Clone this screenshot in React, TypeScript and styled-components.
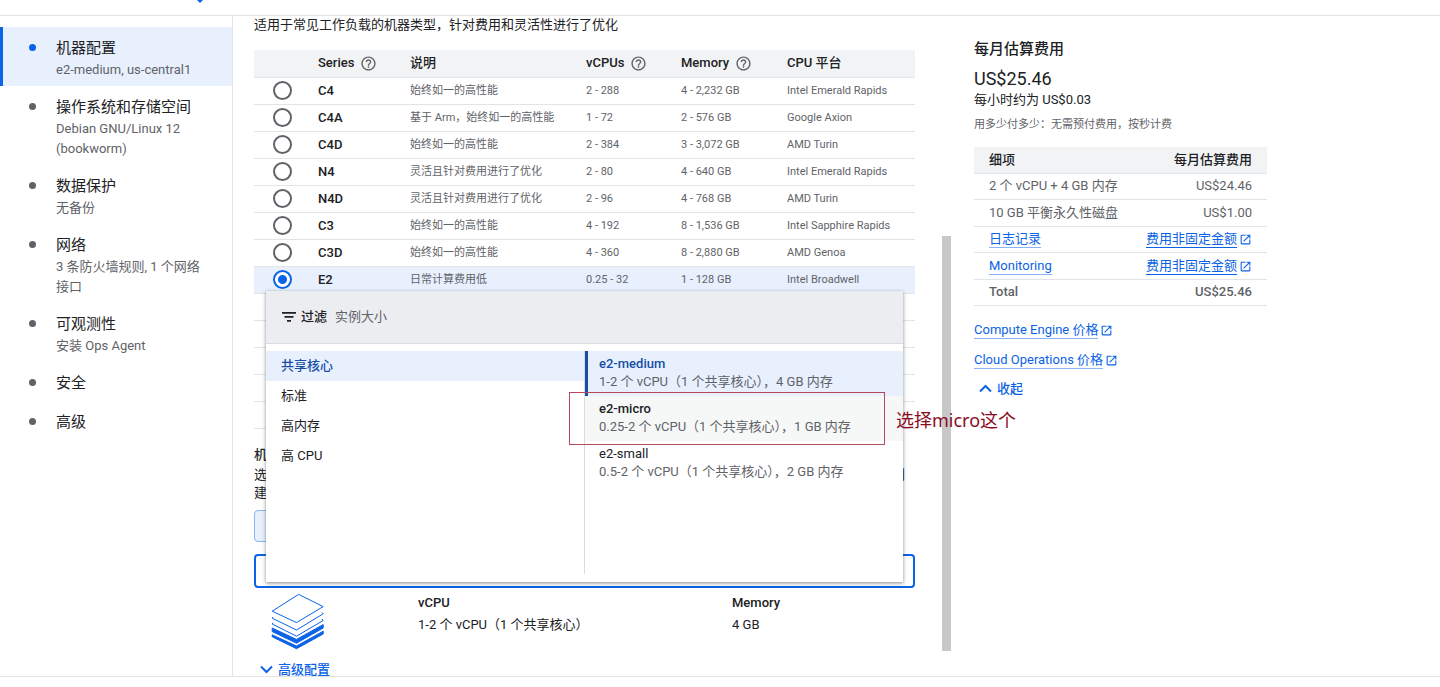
import React, { useState } from "react";
import styled, { createGlobalStyle, css } from "styled-components";
import { MdHelpOutline, MdOpenInNew } from "react-icons/md";

const color = {
  text: "#202124",
  muted: "#5f6368",
  line: "#e3e4e6",
  blue: "#0b63e5",
  navy: "#174ea6",
  selected: "#e8f0fe",
  header: "#f1f3f4",
  note: "#8b0a23",
};

const GlobalStyle = createGlobalStyle`
  * { box-sizing: border-box; }
  body {
    margin: 0;
    background: #fff;
    color: ${color.text};
    font-family: Roboto, "Noto Sans CJK SC", sans-serif;
    font-size: 13px;
    line-height: 18px;
  }
  button { font: inherit; color: inherit; cursor: pointer; }
  p, h2, h3, ul, ol, dl, dd { margin: 0; padding: 0; }
  ul, ol { list-style: none; }
`;

const Page = styled.div`
  display: flex;
  flex-direction: column;
  height: 100vh;
  overflow: hidden;
`;

const TopBar = styled.header`
  flex: none;
  height: 16px;
  padding-left: 196px;
  border-bottom: 1px solid ${color.line};
  svg { display: block; }
`;

const Body = styled.div`
  display: flex;
  flex: 1;
  min-height: 0;
  margin-bottom: 10px;
  border-bottom: 1px solid ${color.line};
  overflow: hidden;
`;

/* ---- step navigation ---- */

const Sidebar = styled.nav`
  flex: none;
  width: 233px;
  padding-top: 11px;
  border-right: 1px solid ${color.line};
`;

const Step = styled.a<{ $active?: boolean }>`
  display: flex;
  gap: 20px;
  padding: 11px 24px 6px 29px;
  color: ${color.text};
  text-decoration: none;
  ${(p) =>
    p.$active &&
    css`
      padding-left: 26px;
      background: ${color.selected};
      border-left: 3px solid ${color.blue};
    `}
`;

const Bullet = styled.span<{ $active?: boolean }>`
  flex: none;
  width: 7px;
  height: 7px;
  margin-top: 6px;
  border-radius: 50%;
  background: ${(p) => (p.$active ? color.blue : color.muted)};
`;

const StepTitle = styled.span`
  display: block;
  padding-bottom: 2px;
  font-size: 15px;
  line-height: 20px;
`;

const StepNote = styled.span`
  display: block;
  color: ${color.muted};
  line-height: 20px;
`;

/* ---- main column ---- */

const Main = styled.main`
  flex: 0 1 682px;
  min-width: 0;
  padding-left: 21px;
`;

const Intro = styled.p`
  padding-bottom: 16px;
`;

const SeriesTable = styled.table`
  width: 100%;
  table-layout: fixed;
  border-collapse: collapse;
  tr { border-bottom: 1px solid ${color.line}; }
  th, td {
    height: 27px;
    padding: 0;
    text-align: left;
    white-space: nowrap;
  }
  thead { background: ${color.header}; }
  thead th { font-weight: 500; }
  tbody th { font-weight: 500; }
  td { color: ${color.muted}; font-size: 11px; }
`;

const SeriesRow = styled.tr<{ $selected?: boolean }>`
  background: ${(p) => (p.$selected ? color.selected : "transparent")};
`;

const HeadLabel = styled.span`
  display: flex;
  align-items: center;
  gap: 6px;
  svg { color: ${color.muted}; }
`;

const Radio = styled.input`
  appearance: none;
  display: block;
  width: 19px;
  height: 19px;
  margin: 0 0 0 19px;
  border: 2px solid ${color.muted};
  border-radius: 50%;
  background: #fff;
  &:checked {
    border-color: ${color.blue};
    background: radial-gradient(circle, ${color.blue} 4px, #fff 5px);
  }
`;

const TypeHeading = styled.h3`
  padding: 17px 0 2px;
  font-size: 13px;
  font-weight: 500;
`;

const TypeText = styled.p`
  display: flex;
  justify-content: space-between;
  padding-right: 10px;
`;

const ModeButton = styled.button`
  display: block;
  width: 58px;
  height: 32px;
  margin: 8px 0 12px;
  padding: 0;
  border: 1px solid #8ab4f8;
  border-radius: 4px 0 0 4px;
  background: ${color.selected};
`;

const Picker = styled.div`
  position: relative;
`;

const PickerField = styled.button`
  display: block;
  width: 100%;
  height: 34px;
  border: 2px solid ${color.blue};
  border-radius: 4px;
  background: #fff;
`;

const Popover = styled.div`
  position: absolute;
  z-index: 2;
  left: 12px;
  right: 12px;
  bottom: 6px;
  height: 291px;
  display: flex;
  flex-direction: column;
  background: #fff;
  box-shadow: 0 1px 3px rgba(60, 64, 67, 0.5), 0 2px 6px rgba(60, 64, 67, 0.15);
`;

const FilterBar = styled.label`
  display: flex;
  align-items: center;
  height: 53px;
  padding: 0 16px;
  background: #ecedf1;
  border-bottom: 1px solid #dadce0;
  font-weight: 500;
`;

const FilterInput = styled.input`
  flex: 1;
  min-width: 0;
  padding: 0 0 0 8px;
  border: 0;
  outline: 0;
  background: transparent;
  font: inherit;
  font-weight: 400;
  &::placeholder { color: ${color.muted}; opacity: 1; }
`;

const FilterCaption = styled.span`
  padding-left: 5px;
`;

const PopoverBody = styled.div`
  display: flex;
  flex: 1;
  padding: 7px 0 8px;
`;

const Families = styled.ul`
  flex: 1;
`;

const Family = styled.button<{ $active?: boolean }>`
  display: block;
  width: 100%;
  height: 30px;
  padding: 0 15px;
  border: 0;
  text-align: left;
  background: ${(p) => (p.$active ? color.selected : "#fff")};
  color: ${(p) => (p.$active ? color.navy : color.text)};
  font-weight: ${(p) => (p.$active ? 500 : 400)};
`;

const Sizes = styled.ul`
  flex: 1;
  border-left: 1px solid #dadce0;
`;

const SizeItem = styled.li`
  position: relative;
`;

const SizeOption = styled.button<{ $state?: "selected" | "hover" }>`
  display: block;
  width: 100%;
  height: 45px;
  padding: 4px 0 5px 14px;
  border: 0;
  text-align: left;
  background: #fff;
  ${(p) =>
    p.$state === "selected" &&
    css`
      padding-left: 11px;
      border-left: 3px solid ${color.navy};
      background: ${color.selected};
    `}
  ${(p) => p.$state === "hover" && css`background: #f6f8f7;`}
`;

const SizeName = styled.span<{ $state?: "selected" | "hover" }>`
  display: block;
  font-weight: ${(p) => (p.$state ? 500 : 400)};
  color: ${(p) => (p.$state === "selected" ? color.navy : color.text)};
`;

const SizeDetail = styled.span`
  display: block;
  color: ${color.muted};
`;

const Marker = styled.div`
  position: absolute;
  z-index: 3;
  top: -4px;
  bottom: -4px;
  left: -16px;
  right: 18px;
  border: 1px solid #b5495b;
  pointer-events: none;
`;

const MarkerNote = styled.span`
  position: absolute;
  left: 100%;
  top: 14px;
  padding-left: 12px;
  color: ${color.note};
  font-family: "Noto Sans", "Noto Sans CJK SC", sans-serif;
  font-size: 18px;
  line-height: 26px;
  white-space: nowrap;
`;

const Specs = styled.div`
  display: flex;
  padding-top: 5px;
  height: 73px;
`;

const LayersCell = styled.div`
  flex: none;
  width: 164px;
  padding-left: 17px;
`;

const Spec = styled.dl`
  flex: none;
  width: 314px;
  padding-top: 1px;
  dt { font-weight: 500; padding-bottom: 4px; }
  &:last-child { flex: 1; }
`;

const Toggle = styled.button<{ $inset: number }>`
  display: flex;
  align-items: center;
  gap: 5px;
  padding: 0 0 0 ${(p) => p.$inset}px;
  border: 0;
  background: none;
  color: ${color.blue};
  font-weight: 500;
`;

const Track = styled.div`
  flex: none;
  width: 36px;
  padding: 220px 0 25px 27px;
`;

const Thumb = styled.div`
  height: 100%;
  background: #c8c8c8;
`;

/* ---- cost column ---- */

const Costs = styled.aside`
  flex: 0 1 293px;
  margin-left: 23px;
  padding-top: 23px;
`;

const CostTitle = styled.h2`
  font-size: 15px;
  line-height: 20px;
  font-weight: 500;
`;

const CostTotal = styled.p`
  padding-top: 8px;
  font-size: 18px;
  line-height: 24px;
`;

const CostNote = styled.p`
  padding: 7px 0 13px;
  color: ${color.muted};
  font-size: 11px;
`;

const CostTable = styled.table`
  width: 100%;
  border-collapse: collapse;
  color: ${color.muted};
  tr { border-bottom: 1px solid ${color.line}; }
  tr > * { height: 26px; padding: 0 0 0 15px; text-align: left; font-weight: 400; white-space: nowrap; }
  tr:nth-child(even) > * { height: 27px; }
  tr > :last-child { padding: 0 15px 0 0; text-align: right; }
  thead th { background: ${color.header}; color: ${color.text}; font-weight: 500; }
  tfoot tr > * { font-weight: 500; }
`;

const Link = styled.a`
  display: inline-flex;
  align-items: center;
  gap: 2px;
  color: ${color.blue};
  text-decoration: none;
`;

const LinkText = styled.span<{ $strong?: boolean }>`
  line-height: 16px;
  border-bottom: 1px solid ${(p) => (p.$strong ? color.blue : "#8ab4f8")};
`;

const PriceLinks = styled.ul`
  display: flex;
  flex-direction: column;
  gap: 12px;
  padding: 16px 0 10px;
  li { display: flex; height: 18px; }
`;

const steps = [
  { title: "机器配置", note: "e2-medium, us-central1" },
  { title: "操作系统和存储空间", note: "Debian GNU/Linux 12 (bookworm)" },
  { title: "数据保护", note: "无备份" },
  { title: "网络", note: "3 条防火墙规则, 1 个网络接口" },
  { title: "可观测性", note: "安装 Ops Agent" },
  { title: "安全" },
  { title: "高级" },
];

const series = [
  ["C4", "始终如一的高性能", "2 - 288", "4 - 2,232 GB", "Intel Emerald Rapids"],
  ["C4A", "基于 Arm，始终如一的高性能", "1 - 72", "2 - 576 GB", "Google Axion"],
  ["C4D", "始终如一的高性能", "2 - 384", "3 - 3,072 GB", "AMD Turin"],
  ["N4", "灵活且针对费用进行了优化", "2 - 80", "4 - 640 GB", "Intel Emerald Rapids"],
  ["N4D", "灵活且针对费用进行了优化", "2 - 96", "4 - 768 GB", "AMD Turin"],
  ["C3", "始终如一的高性能", "4 - 192", "8 - 1,536 GB", "Intel Sapphire Rapids"],
  ["C3D", "始终如一的高性能", "4 - 360", "8 - 2,880 GB", "AMD Genoa"],
  ["E2", "日常计算费用低", "0.25 - 32", "1 - 128 GB", "Intel Broadwell"],
];

const families = ["共享核心", "标准", "高内存", "高 CPU"];

const sizes: { name: string; detail: string; state?: "selected" | "hover" }[] = [
  { name: "e2-medium", detail: "1-2 个 vCPU（1 个共享核心），4 GB 内存", state: "selected" },
  { name: "e2-micro", detail: "0.25-2 个 vCPU（1 个共享核心），1 GB 内存", state: "hover" },
  { name: "e2-small", detail: "0.5-2 个 vCPU（1 个共享核心），2 GB 内存" },
];

const Chevron = ({ up }: { up?: boolean }) => (
  <svg width="13" height="9" viewBox="0 0 13 9" fill="none" stroke="currentColor" strokeWidth="2">
    <path d={up ? "M1 7.5 6.5 2 12 7.5" : "M1 1.5 6.5 7 12 1.5"} />
  </svg>
);

const FilterIcon = () => (
  <svg width="14" height="10" viewBox="0 0 14 10" fill={color.text}>
    <path d="M0 0h14v1.7H0zM2.5 4h9v1.7h-9zM5 8h4v1.7H5z" />
  </svg>
);

const Layers = () => (
  <svg width="54" height="58" viewBox="0 0 54 58" stroke={color.blue} strokeLinejoin="round">
    <path fill={color.blue} d="M1.2 41.8 25.5 53 52.2 38.2V41L25.5 55.7 1.2 43.8Z" />
    <path fill={color.blue} d="M1.2 35 25.5 46.4 52.2 31.6V35L25.5 50.2 1.2 38.6Z" />
    <g fill="none">
      <path d="M2 29.8 1.2 31 25.5 43.2 52.2 27.5 51 26" />
      <path d="M2 24 1.2 25.2 25.5 37 52.2 20.8 51 19.4" />
    </g>
    <path fill="#fff" d="M27.6 1.4 52.2 13.6 25.5 29.6 1.2 18.2Z" />
  </svg>
);

const OutLink = ({ text, strong }: { text: string; strong?: boolean }) => (
  <Link href="#pricing">
    <LinkText $strong={strong}>{text}</LinkText>
    <MdOpenInNew size={13} />
  </Link>
);

const Help = () => <MdHelpOutline size={17} />;

export default function App() {
  const [picked, setPicked] = useState("E2");
  return (
    <>
      <GlobalStyle />
      <Page>
        <TopBar>
          <svg width="8" height="3" viewBox="0 0 8 3">
            <path d="M1 0h6L4 3Z" fill={color.blue} />
          </svg>
        </TopBar>
        <Body>
          <Sidebar>
            {steps.map((s, i) => (
              <Step key={s.title} href="#step" $active={i === 0}>
                <Bullet $active={i === 0} />
                <span>
                  <StepTitle>{s.title}</StepTitle>
                  {s.note && <StepNote>{s.note}</StepNote>}
                </span>
              </Step>
            ))}
          </Sidebar>

          <Main>
            <Intro>适用于常见工作负载的机器类型，针对费用和灵活性进行了优化</Intro>
            <SeriesTable>
              <colgroup>
                <col width="64" />
                <col width="92" />
                <col width="176" />
                <col width="95" />
                <col width="106" />
                <col width="128" />
              </colgroup>
              <thead>
                <tr>
                  <td />
                  <th><HeadLabel>Series <Help /></HeadLabel></th>
                  <th>说明</th>
                  <th><HeadLabel>vCPUs <Help /></HeadLabel></th>
                  <th><HeadLabel>Memory <Help /></HeadLabel></th>
                  <th>CPU 平台</th>
                </tr>
              </thead>
              <tbody>
                {series.map(([name, ...cells]) => (
                  <SeriesRow key={name} $selected={name === picked}>
                    <td>
                      <Radio
                        type="radio"
                        name="series"
                        id={`series-${name}`}
                        checked={name === picked}
                        onChange={() => setPicked(name)}
                      />
                    </td>
                    <th scope="row"><label htmlFor={`series-${name}`}>{name}</label></th>
                    {cells.map((c, i) => <td key={i}>{c}</td>)}
                  </SeriesRow>
                ))}
                {[0, 1, 2, 3, 4].map((n) => (
                  <SeriesRow key={n}><td colSpan={6} /></SeriesRow>
                ))}
              </tbody>
            </SeriesTable>

            <TypeHeading>机</TypeHeading>
            <TypeText><span>选</span><span>创</span></TypeText>
            <TypeText>建</TypeText>
            <ModeButton type="button" aria-label="预设" />

            <Picker>
              <PickerField type="button" aria-haspopup="listbox" aria-expanded="true" aria-label="机器类型" />
              <Popover>
                <FilterBar>
                  <FilterIcon />
                  <FilterCaption>过滤</FilterCaption>
                  <FilterInput type="text" placeholder="实例大小" />
                </FilterBar>
                <PopoverBody>
                  <Families>
                    {families.map((f, i) => (
                      <li key={f}><Family type="button" $active={i === 0}>{f}</Family></li>
                    ))}
                  </Families>
                  <Sizes>
                    {sizes.map((s) => (
                      <SizeItem key={s.name}>
                        <SizeOption type="button" $state={s.state}>
                          <SizeName $state={s.state}>{s.name}</SizeName>
                          <SizeDetail>{s.detail}</SizeDetail>
                        </SizeOption>
                        {s.state === "hover" && (
                          <Marker><MarkerNote>选择micro这个</MarkerNote></Marker>
                        )}
                      </SizeItem>
                    ))}
                  </Sizes>
                </PopoverBody>
              </Popover>
            </Picker>

            <Specs>
              <LayersCell><Layers /></LayersCell>
              <Spec><dt>vCPU</dt><dd>1-2 个 vCPU（1 个共享核心）</dd></Spec>
              <Spec><dt>Memory</dt><dd>4 GB</dd></Spec>
            </Specs>
            <Toggle type="button" $inset={6}><Chevron />高级配置</Toggle>
          </Main>

          <Track><Thumb /></Track>

          <Costs>
            <CostTitle>每月估算费用</CostTitle>
            <CostTotal>US$25.46</CostTotal>
            <p>每小时约为 US$0.03</p>
            <CostNote>用多少付多少：无需预付费用，按秒计费</CostNote>
            <CostTable>
              <thead>
                <tr><th>细项</th><th>每月估算费用</th></tr>
              </thead>
              <tbody>
                <tr><td>2 个 vCPU + 4 GB 内存</td><td>US$24.46</td></tr>
                <tr><td>10 GB 平衡永久性磁盘</td><td>US$1.00</td></tr>
                <tr>
                  <td><Link href="#logging"><LinkText>日志记录</LinkText></Link></td>
                  <td><OutLink text="费用非固定金额" strong /></td>
                </tr>
                <tr>
                  <td><Link href="#monitoring"><LinkText>Monitoring</LinkText></Link></td>
                  <td><OutLink text="费用非固定金额" strong /></td>
                </tr>
              </tbody>
              <tfoot>
                <tr><th>Total</th><td>US$25.46</td></tr>
              </tfoot>
            </CostTable>
            <PriceLinks>
              <li><OutLink text="Compute Engine 价格" /></li>
              <li><OutLink text="Cloud Operations 价格" /></li>
            </PriceLinks>
            <Toggle type="button" $inset={5}><Chevron up />收起</Toggle>
          </Costs>
        </Body>
      </Page>
    </>
  );
}
